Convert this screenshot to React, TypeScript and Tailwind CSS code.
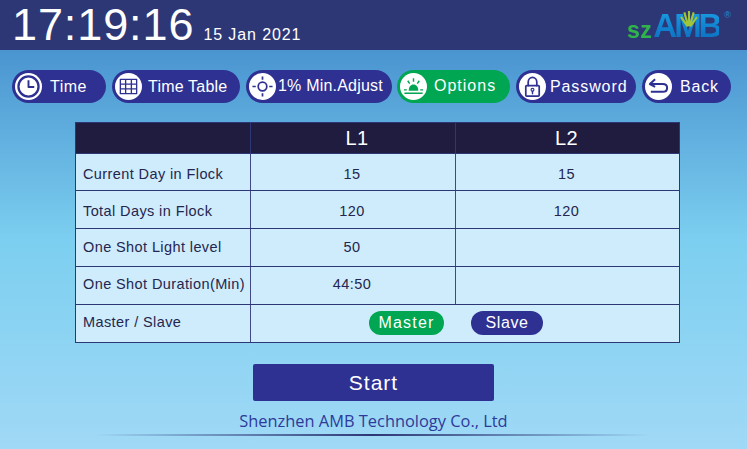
import React from 'react';

const Circle: React.FC<{ children: React.ReactNode }> = ({ children }) => (
  <span className="flex h-[27px] w-[27px] shrink-0 items-center justify-center rounded-full bg-white">
    <svg width="23" height="23" viewBox="0 0 24 24" fill="none" stroke="#2e3192" strokeWidth="2" strokeLinecap="round" strokeLinejoin="round">
      {children}
    </svg>
  </span>
);

const navItems = [
  {
    label: 'Time',
    width: 'w-[94px]',
    text: 'ml-[8px] tracking-[0.5px]',
    icon: (
      <>
        <circle cx="12" cy="12" r="10.5" strokeWidth="2.4" />
        <path d="M12 5.5V12.5H18" strokeWidth="2" strokeLinecap="butt" />
      </>
    ),
  },
  {
    label: 'Time Table',
    width: 'w-[128px]',
    text: 'ml-[6px] tracking-[0.2px]',
    icon: (
      <path d="M3.5 4.5H20.5V19.5H3.5ZM3.5 9.5H20.5M3.5 14.5H20.5M9 4.5V19.5M15 4.5V19.5" strokeWidth="1.4" strokeLinecap="butt" />
    ),
  },
  {
    label: '1% Min.Adjust',
    width: 'w-[146px]',
    text: 'ml-[2px] -mt-[2px] tracking-[0.2px]',
    icon: (
      <>
        <circle cx="12" cy="12" r="4.5" strokeWidth="1.8" />
        <path d="M12 1.5V5M12 19V22.5M1.5 12H5M19 12H22.5" strokeWidth="1.8" strokeLinecap="butt" />
      </>
    ),
  },
  {
    label: 'Options',
    width: 'w-[113px]',
    text: 'ml-[7px] -mt-[1px] tracking-[1px]',
    active: true,
    icon: (
      <g stroke="#00a651">
        <path d="M7 16.500C7 12.500 9 10 12 10C15 10 17 12.500 17 16.500Z" fill="#00a651" stroke="none" />
        <path d="M2.500 19H21.500M2 15.500H5M19 15.500H22M12 3.500V7M6 6L8 9M18 6L16 9" strokeWidth="1.500" strokeLinecap="butt" />
      </g>
    ),
  },
  {
    label: 'Password',
    width: 'w-[120px]',
    text: 'ml-[4px] tracking-[0.9px]',
    icon: (
      <>
        <path d="M7.500 11V7.500C7.500 4.500 9.500 2.500 12 2.500C14.500 2.500 16.500 4.500 16.500 7.500V11" strokeWidth="1.800" />
        <rect x="5" y="11" width="14" height="11" rx="1" strokeWidth="1.800" />
        <circle cx="12" cy="15.500" r="1.500" strokeWidth="1.200" />
        <path d="M12 17V19.500" strokeWidth="1.500" />
      </>
    ),
  },
  {
    label: 'Back',
    width: 'w-[89px]',
    text: 'ml-[8px] tracking-[0.8px]',
    icon: (
      <path d="M8.500 4.500L3 9.500L8.500 12.500M3 9.500H16.500C19.500 9.500 21 11.500 21 13.500C21 16 19 17.500 16.500 17.500H4" strokeWidth="2.100" strokeLinecap="butt" />
    ),
  },
];

const rows = [
  { label: 'Current Day in Flock', l1: '15', l2: '15', height: 'h-[37px]', shift: 'pt-[6px]' },
  { label: 'Total Days in Flock', l1: '120', l2: '120', height: 'h-[38px]', shift: 'pt-[5px]' },
  { label: 'One Shot Light level', l1: '50', l2: '', height: 'h-[38px]', shift: '' },
  { label: 'One Shot Duration(Min)', l1: '44:50', l2: '', height: 'h-[38px]', shift: 'pb-[2px]' },
];

const Logo: React.FC = () => (
  <div className="relative flex h-[32px] w-[94px] items-end">
    <span className="mb-[-1px] text-[23px] leading-[23px] font-bold tracking-[0.5px] text-[#2fb34a]">sz</span>
    <span className="ml-[1px] inline-block bg-gradient-to-b from-[#1a9be2] to-[#0b6fc0] bg-clip-text text-[33px] leading-[30px] font-bold tracking-[-3px] text-transparent">
      AMB
    </span>
    <svg className="absolute top-[1px] left-[52px]" width="20" height="18" viewBox="0 0 30 26" fill="none" stroke="#9fc63b" strokeWidth="3.200">
      <path d="M13 24L3 10M14 24L8 3M15 24V1M16 24L22 3M17 24L27 10" />
    </svg>
    <span className="absolute top-[2px] right-[-10px] text-[9px] leading-none text-[#1a8fd8]">®</span>
  </div>
);

export default function App() {
  return (
    <div className="flex h-[449px] w-[747px] flex-col overflow-hidden bg-[linear-gradient(to_bottom,#4a94d0_50px,#5fadde_130px,#7ccff0_240px,#8fd4f3_350px,#a0d9f6_449px)] font-['Liberation_Sans',sans-serif]">
      <header className="flex h-[50px] shrink-0 items-center justify-between bg-[#2e3775] pr-[26px] pl-[12px] text-white">
        <div className="flex items-baseline">
          <span className="text-[45px] leading-[46px] tracking-[0.9px]">17:19:16</span>
          <span className="ml-[9px] text-[16px] tracking-[0.9px]">15 Jan 2021</span>
        </div>
        <Logo />
      </header>

      <nav className="mt-[20px] flex h-[33px] pl-[12px]">
        {navItems.map((item, i) => (
          <div
            key={item.label}
            className={`flex h-[33px] items-center rounded-full pl-[3px] text-[16px] text-white ${item.width} ${
              item.active ? 'bg-[#00a651]' : 'bg-[#2e3192]'
            } ${i === 0 ? '' : i === 3 ? 'ml-[5px]' : 'ml-[6px]'}`}
          >
            <Circle>{item.icon}</Circle>
            <span className={`whitespace-nowrap ${item.text}`}>{item.label}</span>
          </div>
        ))}
      </nav>

      <div className="mt-[19px] ml-[75px] w-[605px] border border-[#2e3775] text-[14.500px] tracking-[0.4px] text-[#24264f]">
        <div className="grid h-[30px] grid-cols-[174px_205px_1fr] bg-[#1f1c40] text-[20px] text-white">
          <div />
          <div className="flex items-center justify-center border-l border-[#2e3775] pl-[8px]">L1</div>
          <div className="flex items-center justify-center border-l border-[#2e3775] pr-[2px]">L2</div>
        </div>
        {rows.map(row => (
          <div key={row.label} className={`grid grid-cols-[174px_205px_1fr] border-t border-[#2e3775] bg-[#cfecfc] ${row.height}`}>
            <div className={`flex items-center pl-[7px] whitespace-nowrap ${row.shift}`}>{row.label}</div>
            <div className={`flex items-center justify-center border-l border-[#3f4a85] pr-[2px] ${row.shift}`}>{row.l1}</div>
            <div className={`flex items-center justify-center border-l border-[#3f4a85] pr-[2px] ${row.shift}`}>{row.l2}</div>
          </div>
        ))}
        <div className="grid h-[38px] grid-cols-[174px_1fr] border-t border-[#2e3775] bg-[#cfecfc]">
          <div className="flex items-center pb-[2px] pl-[7px]">Master / Slave</div>
          <div className="flex items-center border-l border-[#3f4a85] pb-[2px] pl-[118px] text-[16px] tracking-[0.6px] text-white">
            <span className="flex h-[24px] w-[75px] items-center justify-center rounded-full bg-[#00a651] tracking-[1.2px]">Master</span>
            <span className="ml-[27px] flex h-[24px] w-[72px] items-center justify-center rounded-full bg-[#2e3192]">Slave</span>
          </div>
        </div>
      </div>

      <button className="mt-[21px] ml-[253px] flex h-[37px] w-[241px] items-center justify-center rounded-[2px] bg-[#2e3192] text-[21px] tracking-[1px] text-white">
        Start
      </button>

      <div className="mt-[10px] text-center font-['Open_Sans',sans-serif] text-[16.400px] leading-[20px] text-[#2e3a9a]">
        Shenzhen AMB Technology Co., Ltd
      </div>

      <div className="mt-[3px] ml-[95px] h-[2px] w-[555px] bg-[linear-gradient(to_right,transparent,#2e3775_50%,transparent)]" />
    </div>
  );
}
